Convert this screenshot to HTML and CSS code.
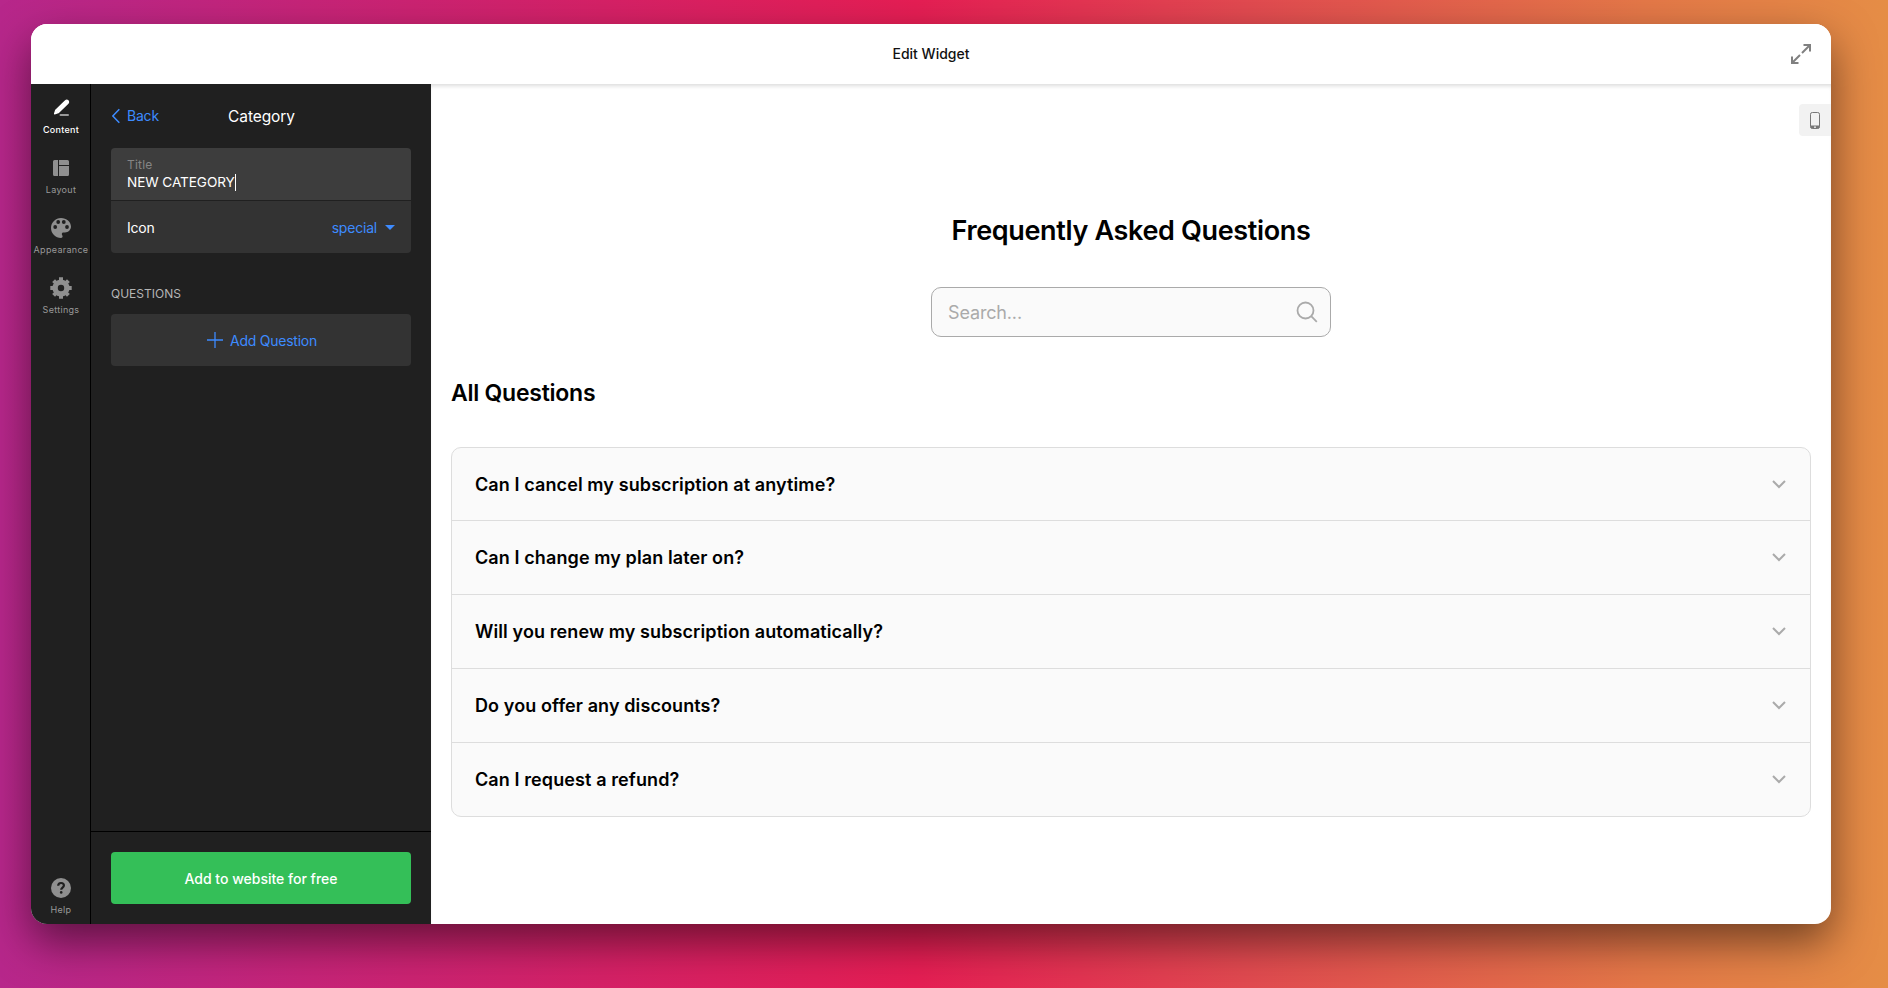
FILE: index.html
```html
<!DOCTYPE html>
<html lang="en">
<head>
<meta charset="utf-8">
<title>Edit Widget</title>
<link rel="stylesheet" href="styles.css">
</head>
<body>
<div class="window">
  <header class="topbar">
    <span class="topbar-title">Edit Widget</span>
    <svg class="expand" width="22" height="22" viewBox="0 0 22 22" fill="none" stroke="#808080" stroke-width="2"><path d="M13.500 2H20v6.500M20 2l-8 8M8.500 20H2v-6.500M2 20l8-8"/></svg>
  </header>
  <div class="body">
    <nav class="rail">
      <a class="rail-item active">
        <svg width="24" height="24" viewBox="0 0 24 24"><path d="M5.600 17.800l1.100-3.700L16.500 4.800a1.700 1.700 0 0 1 2.500 2.500L9.200 16.700z" fill="#fff" stroke="#fff" stroke-width="1.300" stroke-linejoin="round"/><path d="M11.500 19h7.500" stroke="#999" stroke-width="2" stroke-linecap="round"/></svg>
        <span>Content</span>
      </a>
      <a class="rail-item">
        <svg width="24" height="24" viewBox="0 0 24 24" fill="#8f8f8f"><path d="M5.500 4H9v16H5.500A1.500 1.500 0 0 1 4 18.500v-13A1.500 1.500 0 0 1 5.500 4zM10 4h8.500A1.500 1.500 0 0 1 20 5.500V9H10zM10 10h10v8.500a1.500 1.500 0 0 1-1.500 1.500H10z"/></svg>
        <span>Layout</span>
      </a>
      <a class="rail-item">
        <svg width="24" height="24" viewBox="0 0 24 24"><path d="M12 2C6.500 2 2 6.500 2 12s4.500 10 10 10c.9 0 1.600-.7 1.600-1.700 0-.4-.2-.8-.4-1.100-.3-.3-.4-.7-.4-1.100 0-.9.700-1.600 1.600-1.600H16c3.300 0 6-2.700 6-5.900C22 6 17.500 2 12 2z" fill="#8f8f8f"/><g fill="#202020"><circle cx="6.200" cy="11" r="1.900"/><circle cx="9.200" cy="6" r="1.900"/><circle cx="14.800" cy="6" r="1.900"/><circle cx="18" cy="11" r="1.900"/></g></svg>
        <span>Appearance</span>
      </a>
      <a class="rail-item">
        <svg width="24" height="24" viewBox="0 0 24 24" fill="none" stroke="#8f8f8f"><circle cx="12" cy="12" r="5.900" stroke-width="5.400"/><path d="M12 1.300v4M12 18.700v4M1.300 12h4M18.700 12h4M4.600 4.600l3 3M16.400 16.400l3 3M4.600 19.400l3-3M16.400 7.600l3-3" stroke-width="4"/></svg>
        <span>Settings</span>
      </a>
      <a class="rail-item help">
        <svg width="24" height="24" viewBox="0 0 24 24"><circle cx="12" cy="12" r="10" fill="#8f8f8f"/><path d="M9.200 9.800c0-1.700 1.200-2.800 2.800-2.800s2.900 1 2.900 2.500c0 2.100-2.700 2.200-2.700 4.300" fill="none" stroke="#202020" stroke-width="2.200"/><circle cx="12.200" cy="16.400" r="1.300" fill="#202020"/></svg>
        <span>Help</span>
      </a>
    </nav>
    <aside class="panel">
      <div class="panel-main">
        <div class="panel-head">
          <a class="back"><svg width="9" height="16" viewBox="0 0 9 16" fill="none" stroke="#3d8bff" stroke-width="1.500"><path d="M8.300 1.200L1.800 8l6.500 6.800"/></svg>Back</a>
          <h2 class="panel-title">Category</h2>
        </div>
        <div class="fields">
          <div class="field field-title"><label>Title</label><div class="value">NEW CATEGORY<i class="caret"></i></div></div>
          <div class="field field-icon"><span>Icon</span><span class="select">special<i class="triangle"></i></span></div>
        </div>
        <h3 class="section">QUESTIONS</h3>
        <div class="add"><svg width="16" height="16" viewBox="0 0 16 16" stroke="#3d8bff" stroke-width="1.300"><path d="M8 0v16M0 8h16"/></svg>Add Question</div>
      </div>
      <div class="panel-foot"><div class="cta">Add to website for free</div></div>
    </aside>
    <main class="preview">
      <div class="device"><svg width="10" height="17" viewBox="0 0 10 17"><rect x=".5" y=".5" width="9" height="16" rx="1.800" fill="none" stroke="#777"/><path d="M.5 13.500h9v1.200a1.800 1.800 0 0 1-1.800 1.800H2.300A1.800 1.800 0 0 1 .5 14.700z" fill="#777"/><circle cx="5" cy="15.200" r=".9" fill="#f2f2f2"/></svg></div>
      <h1 class="faq-title">Frequently Asked Questions</h1>
      <div class="search"><span>Search...</span><svg width="22" height="22" viewBox="0 0 22 22" fill="none" stroke="#aaa" stroke-width="1.800"><circle cx="9.500" cy="9.500" r="8"/><path d="M15.200 15.200l5.600 5.600"/></svg></div>
      <h2 class="all">All Questions</h2>
      <ul class="list">
        <li><span class="q">Can I cancel my subscription at anytime?</span><svg class="chev" viewBox="0 0 14 9"><path d="M1 1l6 6 6-6"/></svg></li>
        <li><span class="q">Can I change my plan later on?</span><svg class="chev" viewBox="0 0 14 9"><path d="M1 1l6 6 6-6"/></svg></li>
        <li><span class="q">Will you renew my subscription automatically?</span><svg class="chev" viewBox="0 0 14 9"><path d="M1 1l6 6 6-6"/></svg></li>
        <li><span class="q">Do you offer any discounts?</span><svg class="chev" viewBox="0 0 14 9"><path d="M1 1l6 6 6-6"/></svg></li>
        <li><span class="q">Can I request a refund?</span><svg class="chev" viewBox="0 0 14 9"><path d="M1 1l6 6 6-6"/></svg></li>
      </ul>
    </main>
  </div>
</div>
</body>
</html>
```

FILE: styles.css
```css
* { box-sizing: border-box; margin: 0; padding: 0; }
body {
  width: 1888px; height: 988px; overflow: hidden;
  padding: 24px 57px 64px 31px;
  font-family: Inter, "Liberation Sans", sans-serif;
  background: linear-gradient(90deg, #b7278b 0%, #e61e54 48.5%, #e24a50 66%, #e57848 87%, #e58d46 100%);
}
.window {
  width: 1800px; height: 900px; border-radius: 16px; overflow: hidden;
  display: flex; flex-direction: column; background: #fff;
  box-shadow: 0 18px 44px rgba(0,0,0,.5);
}
.topbar {
  flex: 0 0 60px; display: grid; place-items: center; position: relative;
  background: #fff;
}
.topbar-title { font-size: 14px; font-weight: 500; color: #111; padding-bottom: 1px; }
.expand { position: absolute; right: 19px; top: 19px; }
.body { flex: 1; display: flex; min-height: 0; }
.rail { width: 60px; background: #202020; border-right: 1px solid #000; display: flex; flex-direction: column; }
.rail-item {
  height: 60px; padding: 12px 0 0 1px; display: flex; flex-direction: column; align-items: center; gap: 4px;
  font-size: 9px; line-height: 12px; font-weight: 400; letter-spacing: .3px; color: #999; white-space: nowrap;
}
.rail-item.active { color: #fff; font-weight: 500; letter-spacing: .25px; }
.help { margin-top: auto; }
.panel { width: 340px; background: #202020; display: flex; flex-direction: column; color: #fff; font-size: 14px; }
.panel-main { flex: 1; padding: 0 20px; }
.panel-head { height: 64px; display: grid; grid-template-columns: 1fr auto 1fr; align-items: center; }
.back { display: flex; align-items: center; gap: 7px; color: #3d8bff; letter-spacing: -.2px; padding-bottom: 1px; }
.panel-title { font-size: 15.5px; font-weight: 400; letter-spacing: -.1px; padding-left: 1px; }
.fields { border-radius: 4px; overflow: hidden; }
.field { padding: 0 16px; height: 52px; }
.field-title { background: #3d3d3d; padding-top: 9px; }
.field-title label { display: block; font-size: 12px; line-height: 16px; letter-spacing: .2px; color: #858585; }
.value { display: flex; align-items: center; line-height: 18px; font-size: 13.6px; letter-spacing: -.08px; }
.caret { width: 1px; height: 17px; background: #fff; }
.field-icon { margin-top: 1px; background: #333; display: flex; align-items: center; justify-content: space-between; letter-spacing: -.2px; }
.select { display: flex; align-items: center; gap: 8px; color: #3d8bff; }
.triangle { border: 5px solid transparent; border-top-color: #3d8bff; border-bottom: 0; }
.section { margin-top: 33px; font-size: 12px; line-height: 16px; font-weight: 400; color: #b5b5b5; }
.add { margin-top: 12px; height: 52px; padding-left: 2px; border-radius: 4px; background: #333; display: flex; align-items: center; justify-content: center; gap: 7px; color: #3d8bff; letter-spacing: -.25px; }
.panel-foot { border-top: 1px solid #000; height: 93px; padding: 20px; }
.cta { height: 52px; border-radius: 4px; background: #34bf58; display: grid; place-items: center; font-weight: 500; }
.preview { flex: 1; position: relative; padding: 0 20px; display: flex; flex-direction: column; align-items: center; color: #000; box-shadow: inset 0 4px 4px -2px rgba(0,0,0,.14); }
.device { position: absolute; right: 0; top: 20px; width: 32px; height: 32px; border-radius: 4px 0 0 4px; background: #f2f2f2; display: grid; place-items: center; }
.faq-title { margin-top: 130px; font-size: 27px; line-height: 34px; font-weight: 600; letter-spacing: -.35px; }
.search { margin-top: 39px; width: 400px; height: 50px; padding: 0 12px 0 16px; border: 1px solid #aaa; border-radius: 10px; background: #fafafa; display: flex; align-items: center; justify-content: space-between; font-size: 18px; letter-spacing: -.15px; color: #aaa; }
.all { align-self: stretch; margin-top: 41px; font-size: 23px; line-height: 30px; font-weight: 600; letter-spacing: -.25px; }
.list { align-self: stretch; margin-top: 39px; list-style: none; border: 1px solid #ddd; border-radius: 10px; background: #fafafa; }
.list li { height: 74px; padding: 0 24px 0 23px; display: flex; align-items: center; justify-content: space-between; border-bottom: 1px solid #ddd; }
.list li:first-child { height: 73px; }
.list li:last-child { border-bottom: 0; height: 73px; }
.q { font-size: 18px; font-weight: 600; letter-spacing: .1px; }
.chev { width: 14px; height: 9px; fill: none; stroke: #aaa; stroke-width: 2; }
```
